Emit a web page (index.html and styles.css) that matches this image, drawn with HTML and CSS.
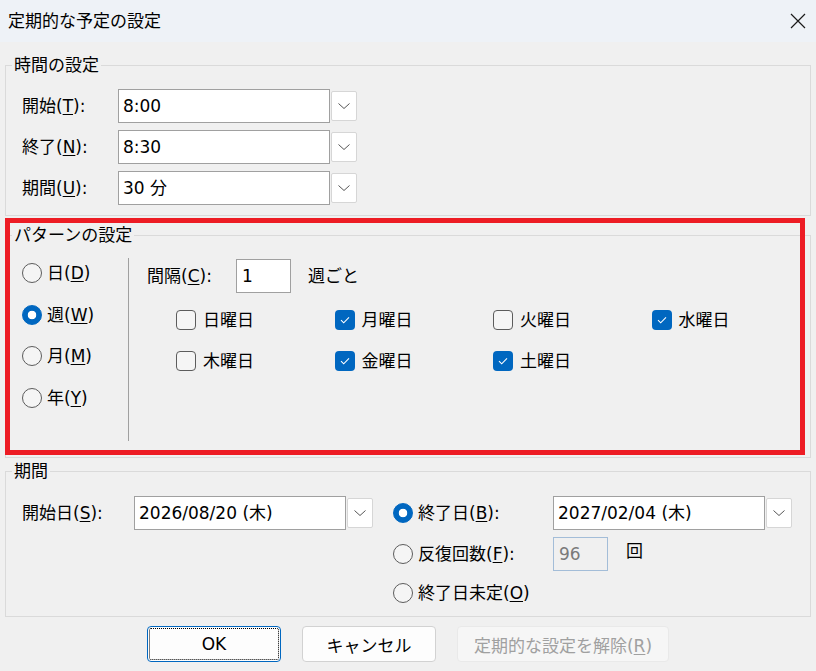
FILE: index.html
```html
<!DOCTYPE html>
<html lang="ja">
<head>
    <meta charset="utf-8">
    <link rel="stylesheet" href="styles.css">
</head>
<body>

<div class="window">
    <div class="titlebar">
        <span class="title">定期的な予定の設定</span>
        <svg class="close" width="16" height="16" viewBox="0 0 16 16">
            <path d="M1 1 L15 15 M15 1 L1 15" stroke="#1a1a1a" stroke-width="1.2" fill="none"/>
        </svg>
    </div>

    <fieldset class="group time-group">
        <legend>時間の設定</legend>
        <div class="time-body">
            <div class="field-row">
                <span class="field-label">開始(<u>T</u>):</span>
                <div class="text-box">8:00</div>
                <span class="drop-btn"><svg width="12" height="6" viewBox="0 0 12 6"><path d="M0.5 0.5 L6 5.5 L11.5 0.5" stroke="#555" fill="none"/></svg></span>
            </div>
            <div class="field-row">
                <span class="field-label">終了(<u>N</u>):</span>
                <div class="text-box">8:30</div>
                <span class="drop-btn"><svg width="12" height="6" viewBox="0 0 12 6"><path d="M0.5 0.5 L6 5.5 L11.5 0.5" stroke="#555" fill="none"/></svg></span>
            </div>
            <div class="field-row">
                <span class="field-label">期間(<u>U</u>):</span>
                <div class="text-box">30 分</div>
                <span class="drop-btn"><svg width="12" height="6" viewBox="0 0 12 6"><path d="M0.5 0.5 L6 5.5 L11.5 0.5" stroke="#555" fill="none"/></svg></span>
            </div>
        </div>
    </fieldset>

    <fieldset class="group pattern-group">
        <legend>パターンの設定</legend>
        <div class="pattern-body">
            <div class="recur-types">
                <label class="radio"><span class="radio-dot"></span>日(<u>D</u>)</label>
                <label class="radio"><span class="radio-dot on"></span>週(<u>W</u>)</label>
                <label class="radio"><span class="radio-dot"></span>月(<u>M</u>)</label>
                <label class="radio"><span class="radio-dot"></span>年(<u>Y</u>)</label>
            </div>
            <div class="recur-detail">
                <div class="interval-row">
                    <span class="interval-label">間隔(<u>C</u>):</span>
                    <div class="text-box interval-box">1</div>
                    <span class="interval-unit">週ごと</span>
                </div>
                <div class="weekdays">
                    <label class="check"><span class="check-box"></span>日曜日</label>
                    <label class="check"><span class="check-box on"><svg width="20" height="20" viewBox="0 0 20 20"><path d="M6 10.2 L8.7 12.8 L14 7.4" stroke="#fff" stroke-width="1.1" fill="none"/></svg></span>月曜日</label>
                    <label class="check"><span class="check-box"></span>火曜日</label>
                    <label class="check"><span class="check-box on"><svg width="20" height="20" viewBox="0 0 20 20"><path d="M6 10.2 L8.7 12.8 L14 7.4" stroke="#fff" stroke-width="1.1" fill="none"/></svg></span>水曜日</label>
                    <label class="check"><span class="check-box"></span>木曜日</label>
                    <label class="check"><span class="check-box on"><svg width="20" height="20" viewBox="0 0 20 20"><path d="M6 10.2 L8.7 12.8 L14 7.4" stroke="#fff" stroke-width="1.1" fill="none"/></svg></span>金曜日</label>
                    <label class="check"><span class="check-box on"><svg width="20" height="20" viewBox="0 0 20 20"><path d="M6 10.2 L8.7 12.8 L14 7.4" stroke="#fff" stroke-width="1.1" fill="none"/></svg></span>土曜日</label>
                </div>
            </div>
        </div>
    </fieldset>

    <fieldset class="group range-group">
        <legend>期間</legend>
        <div class="range-body">
            <div class="start-side">
                <span class="start-label">開始日(<u>S</u>):</span>
                <div class="text-box">2026/08/20 (木)</div>
                <span class="drop-btn"><svg width="12" height="6" viewBox="0 0 12 6"><path d="M0.5 0.5 L6 5.5 L11.5 0.5" stroke="#555" fill="none"/></svg></span>
            </div>
            <div class="end-side">
                <div class="end-row">
                    <label class="radio end-label"><span class="radio-dot on"></span>終了日(<u>B</u>):</label>
                    <div class="text-box">2027/02/04 (木)</div>
                    <span class="drop-btn"><svg width="12" height="6" viewBox="0 0 12 6"><path d="M0.5 0.5 L6 5.5 L11.5 0.5" stroke="#555" fill="none"/></svg></span>
                </div>
                <div class="end-row">
                    <label class="radio end-label"><span class="radio-dot"></span>反復回数(<u>F</u>):</label>
                    <div class="text-box count-box">96</div>
                    <span class="count-unit">回</span>
                </div>
                <div class="end-row short">
                    <label class="radio"><span class="radio-dot"></span>終了日未定(<u>O</u>)</label>
                </div>
            </div>
        </div>
    </fieldset>

    <div class="buttons">
        <button type="button" class="btn btn-default">OK</button>
        <button type="button" class="btn">キャンセル</button>
        <button type="button" class="btn btn-wide" disabled>定期的な設定を解除(<u>R</u>)</button>
    </div>

    <div class="highlight"></div>
</div>

</body>
</html>
```

FILE: styles.css
```css
* {
    box-sizing: border-box;
}

body {
    margin: 0;
    background-color: #f0f0f0;
    font-family: "DejaVu Sans", "Noto Sans CJK JP", sans-serif;
    font-size: 17px;
    line-height: 20px;
    color: #000;
}

u {
    text-underline-offset: 2px;
    text-decoration-thickness: 1px;
}

.window {
    position: relative;
    width: 816px;
    height: 671px;
    overflow: hidden;
}

.titlebar {
    height: 42px;
    background-color: #eef2f7;
    display: flex;
    align-items: center;
    justify-content: space-between;
    padding: 0 10px 0 8px;
}

.close {
    display: block;
}

/* group boxes */
.group {
    margin: 0 5px;
    padding: 0;
    border: 1px solid #dadada;
    min-width: 0;
}

.group legend {
    margin-left: 6px;
    padding: 0 2px;
    line-height: 20px;
}

.time-group {
    margin-top: 13px;
}

.pattern-group {
    margin-top: 9px;
}

.range-group {
    margin-top: 3px;
}

/* text boxes and drop buttons */
.text-box {
    width: 212px;
    height: 34px;
    line-height: 32px;
    padding-left: 4px;
    background-color: #fff;
    border: 1px solid #a0a0a0;
    white-space: nowrap;
}

.drop-btn {
    width: 26px;
    height: 30px;
    margin-left: 1px;
    background-color: #fff;
    border: 1px solid #d6d6d6;
    border-radius: 2px;
    display: flex;
    align-items: center;
    justify-content: center;
}

/* time group */
.time-body {
    padding: 14px 0 10px 16px;
    display: flex;
    flex-direction: column;
    gap: 7px;
}

.field-row {
    display: flex;
    align-items: center;
    height: 34px;
}

.field-label {
    width: 96px;
}

/* radios & checks */
.radio,
.check {
    display: flex;
    align-items: center;
    height: 30px;
    white-space: nowrap;
}

.radio-dot {
    width: 20px;
    height: 20px;
    margin-right: 5px;
    border: 1px solid #5c5c5c;
    border-radius: 50%;
    background-color: #f5f5f5;
    flex-shrink: 0;
}

.radio-dot.on {
    border-color: #0067c0;
    background: radial-gradient(circle, #fff 0 4px, #0067c0 4.6px);
}

.check-box {
    width: 20px;
    height: 20px;
    margin-right: 7px;
    border: 1px solid #5c5c5c;
    border-radius: 4px;
    background-color: #f5f5f5;
    flex-shrink: 0;
}

.check-box.on {
    border: none;
    background-color: #0067c0;
}

.check-box svg {
    display: block;
}

/* pattern group */
.pattern-body {
    display: flex;
    padding: 13px 0 16px 16px;
}

.recur-types {
    width: 106px;
    height: 183px;
    display: flex;
    flex-direction: column;
    gap: 11.5px;
}

.recur-detail {
    flex: 1;
    border-left: 1px solid #a0a0a0;
    padding-left: 18px;
}

.interval-row {
    display: flex;
    align-items: center;
    height: 34px;
    margin-top: 1px;
}

.interval-label {
    width: 89px;
}

.interval-box {
    width: 55px;
    padding-left: 5px;
}

.interval-unit {
    margin-left: 17px;
}

.weekdays {
    display: grid;
    grid-template-columns: repeat(4, 158.5px);
    grid-auto-rows: 30px;
    row-gap: 11px;
    margin: 12px 0 0 29px;
}

/* range group */
.range-body {
    display: flex;
    padding: 15px 0 8px 16px;
}

.start-side {
    display: flex;
    align-items: center;
    height: 34px;
}

.start-label {
    width: 112px;
}

.end-side {
    margin-left: 20px;
    display: flex;
    flex-direction: column;
    gap: 7px;
}

.end-row {
    display: flex;
    align-items: center;
    height: 34px;
}

.end-row.short {
    height: 30px;
}

.end-label {
    width: 160px;
}

.count-box {
    width: 55px;
    background-color: #f0f0f0;
    border-color: #a3bdd8;
    color: #7a7a7a;
    padding-left: 5px;
}

.count-unit {
    margin-left: 18px;
    align-self: flex-start;
    margin-top: 4px;
}

/* buttons */
.buttons {
    display: flex;
    justify-content: center;
    gap: 21px;
    margin-top: 9px;
}

.btn {
    width: 134px;
    height: 36px;
    background-color: #fdfdfd;
    border: 1px solid #d2d2d2;
    border-radius: 4px;
    font-family: inherit;
    font-size: 17px;
    color: #000;
    padding: 0;
}

.btn-default {
    border-color: #0067c0;
    outline: 1px dotted #000;
    outline-offset: -3px;
}

.btn-wide {
    width: 212px;
}

.btn:disabled {
    background-color: #f6f6f6;
    border-color: #e9e9e9;
    color: #a0a0a0;
}

/* annotation frame */
.highlight {
    position: absolute;
    left: 5px;
    top: 218px;
    width: 800px;
    height: 237px;
    border: 5px solid #ed1c24;
}
```
